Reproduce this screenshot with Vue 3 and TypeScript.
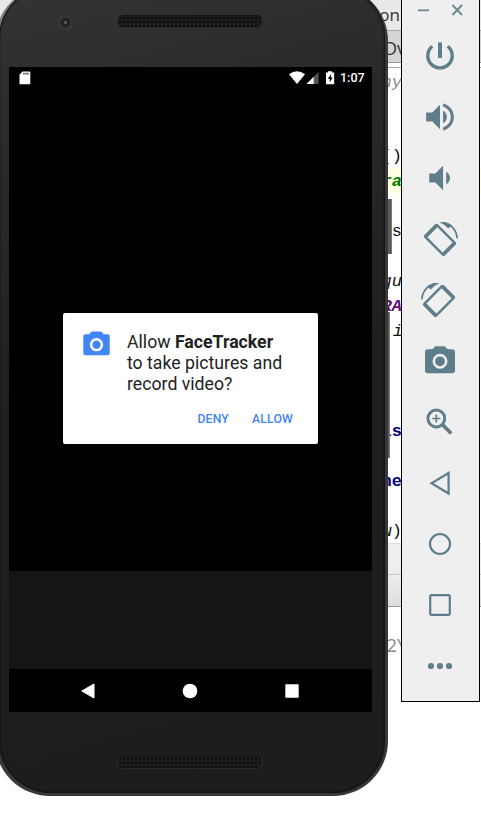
<script setup lang="ts">
interface CodeLine {
  text: string
  tone?: string
}

const codeLines: CodeLine[] = [
  { text: 'ny', tone: 'comment' },
  { text: '' },
  { text: '' },
  { text: '()' },
  { text: 'ra', tone: 'string' },
  { text: '' },
  { text: 's' },
  { text: '' },
  { text: 'qu', tone: 'italic' },
  { text: 'RA', tone: 'constant' },
  { text: 'i', tone: 'italic last' },
  { text: '' },
  { text: '' },
  { text: '' },
  { text: 'is', tone: 'keyword' },
  { text: '' },
  { text: 'ne', tone: 'keyword' },
  { text: '' },
  { text: 'w)' },
]

const tools: string[] = [
  'power', 'volume-up', 'volume-down', 'rotate-left', 'rotate-right',
  'camera', 'zoom', 'back', 'home', 'overview', 'more',
]
</script>

<template>
  <main class="desktop">
    <section class="editor">
      <div class="title-row"><span>on</span></div>
      <div class="tab-row"><span>Dv</span></div>
      <div class="code">
        <div v-for="(line, i) in codeLines" :key="i" class="line" :class="line.tone">
          <span>{{ line.text }}</span>
        </div>
      </div>
      <div class="panel-head"></div>
      <div class="panel-bar"></div>
      <div class="log-row"><span>b2Y</span></div>
    </section>

    <div class="side-key power-key"></div>
    <div class="side-key volume-key"></div>

    <section class="phone">
      <div class="face">
        <div class="top-bezel">
          <i class="lens"></i>
          <i class="speaker"></i>
        </div>
        <div class="screen">
          <header class="status">
            <svg class="sd" width="12" height="14" viewBox="0 0 12 14">
              <path d="M3.500.5H10.500Q11.300.5 11.300 1.300V12.500Q11.300 13.300 10.500 13.300H1.300Q.5 13.300.5 12.500V3.700z" fill="#fff" />
              <path d="M4.900 1.800v1.800M6.900 1.800v1.800M8.900 1.800v1.800" stroke="#222" stroke-width="1.200" />
            </svg>
            <svg class="signals" width="46" height="14" viewBox="0 0 46 14">
              <path d="M0 3.200Q8 -2.600 16 3.200L8 13z" fill="#fff" />
              <path d="M29.500 1V13H17.500z" fill="#555" />
              <path d="M24.700 5.800V13H17.500z" fill="#fff" />
              <path d="M37 1.500h2V.3h4v1.200h2.200V13.300H37z" fill="#fff" />
              <path d="M41.900 3.200l-3.100 4.600h1.900v3.500l3-4.800h-1.800z" fill="#000" />
            </svg>
            <span class="clock">1:07</span>
          </header>
          <div class="app">
            <div class="dialog">
              <div class="message">
                <svg class="dialog-camera" width="27" height="25" viewBox="0 0 27 25">
                  <path d="M8.700.5h9.600l2.400 2.700h4Q26.700 3.200 26.700 5.200V22.200Q26.700 24.200 24.700 24.200H2.300Q.3 24.200.3 22.200V5.200Q.3 3.200 2.300 3.200h4z" fill="#4285f4" />
                  <circle cx="13.500" cy="13.700" r="5.400" fill="none" stroke="#fff" stroke-width="2.500" />
                </svg>
                <p>Allow <b>FaceTracker</b><br>to take pictures and<br>record video?</p>
              </div>
              <div class="actions"><button>DENY</button><button>ALLOW</button></div>
            </div>
          </div>
          <div class="dock"></div>
          <nav class="nav">
            <svg width="14" height="16" viewBox="0 0 14 16"><path d="M13 1V15L.8 8z" fill="#fff" stroke="#fff" stroke-linejoin="round" /></svg>
            <svg width="16" height="16" viewBox="0 0 16 16"><circle cx="8" cy="8" r="7.300" fill="#fff" /></svg>
            <svg width="14" height="14" viewBox="0 0 14 14"><rect x=".3" y=".3" width="13.400" height="13.400" rx=".8" fill="#fff" /></svg>
          </nav>
        </div>
        <div class="bottom-bezel"><i class="speaker"></i></div>
      </div>
    </section>

    <aside class="toolbar">
      <div class="window-controls">
        <svg width="46" height="14" viewBox="0 0 46 14" fill="none" stroke="#6d8793">
          <path d="M0 7.300H11" stroke-width="1.800" />
          <path d="M34.500 2L44 12M44 2L34.500 12" stroke-width="1.900" />
        </svg>
      </div>
      <div v-for="tool in tools" :key="tool" class="tool">
        <svg width="40" height="40" viewBox="-20 -20 40 40" fill="#607d8b">
          <g v-if="tool === 'power'" fill="none" stroke="#607d8b">
            <path d="M0 -13.500V2" stroke-width="4" />
            <path d="M-7.700 -9.800A12.200 12.200 0 1 0 7.700 -9.800" stroke-width="3.400" />
          </g>
          <path v-else-if="tool === 'volume-up'" transform="scale(1.540) translate(-12 -12)" d="M3 9v6h4l5 5V4L7 9H3zm13.500 3c0-1.770-1.020-3.290-2.500-4.030v8.050c1.480-.73 2.500-2.250 2.500-4.020zM14 3.230v2.060c2.890.86 5 3.540 5 6.710s-2.110 5.850-5 6.710v2.060c4.010-.91 7-4.490 7-8.770s-2.990-7.860-7-8.770z" />
          <path v-else-if="tool === 'volume-down'" transform="scale(1.540) translate(-12 -12)" d="M18.500 12c0-1.770-1.020-3.290-2.500-4.030v8.050c1.480-.73 2.500-2.250 2.500-4.020zM5 9v6h4l5 5V4L9 9H5z" />
          <g v-else-if="tool.startsWith('rotate')" :transform="tool === 'rotate-right' ? 'translate(-1 0) scale(-1 1)' : undefined">
            <path transform="translate(0 .9) rotate(45)" fill-rule="evenodd" d="M-12.500 -9.500H12.500Q14.500 -9.500 14.500 -7.500V7.500Q14.500 9.500 12.500 9.500H-12.500Q-14.500 9.500 -14.500 7.500V-7.500Q-14.500 -9.500 -12.500 -9.500zM-10.700 -7.100V7.100H10.700V-7.100z" />
            <path d="M2 -16.200C10 -16.500 16.500 -9.500 17.200 -.6" fill="none" stroke="#607d8b" stroke-width="1.700" />
            <path d="M-1 -16.500Q6 -18.500 12 -13.500L8.200 -10.500L5.700 -13.100Q3 -15.500 -1 -16.500z" />
          </g>
          <g v-else-if="tool === 'camera'">
            <path d="M-4.600 -14.700h9.200l3.100 3h4.500Q15 -11.700 15 -8.900V9.500Q15 12.300 12.200 12.300H-12.200Q-15 12.300 -15 9.500V-8.900Q-15 -11.700 -12.200 -11.700h4.500z" />
            <circle cy=".3" r="6.200" fill="none" stroke="#eee" stroke-width="2.600" />
          </g>
          <g v-else-if="tool === 'zoom'" fill="none" stroke="#607d8b">
            <circle cx="-3.700" cy="-3.500" r="8.400" stroke-width="3" />
            <path d="M2.800 3L11.300 11.500" stroke-width="3.800" />
            <path d="M-3.700 -7.500V.5M-7.700 -3.500H.3" stroke-width="1.700" />
          </g>
          <path v-else-if="tool === 'back'" d="M8.600 -10V10.500L-8.500 .2z" fill="none" stroke="#607d8b" stroke-width="2.200" />
          <circle v-else-if="tool === 'home'" r="10" fill="none" stroke="#607d8b" stroke-width="2.200" />
          <rect v-else-if="tool === 'overview'" x="-9.800" y="-9.800" width="19.600" height="19.600" rx="1" fill="none" stroke="#607d8b" stroke-width="2.200" />
          <g v-else>
            <circle cx="-9" r="3.100" /><circle r="3.100" /><circle cx="9" r="3.100" />
          </g>
        </svg>
      </div>
    </aside>
  </main>
</template>

<style>
body { margin: 0; overflow: hidden; background: #fff; }
</style>

<style scoped>
* { box-sizing: border-box; }
svg { display: block; flex: none; }
.desktop { position: relative; width: 481px; height: 813px; overflow: hidden; background: #fff; }
.editor { width: 481px; font-family: "Open Sans", sans-serif; color: #333; }
.editor span { display: block; width: 402px; text-align: right; white-space: pre; overflow: hidden; }
.title-row { height: 31px; background: #e8e8e8; border-bottom: 1px solid #aaa; font-size: 17px; line-height: 29px; }
.title-row span { width: 400px; }
.tab-row { height: 36px; background: #d4d4d4; border-bottom: 4px solid #fff; box-shadow: inset 0 -1px #999; font-size: 18px; line-height: 34px; }
.tab-row span { width: 406px; }
.code { border-top: 1px solid #aaa; font: 17px/25px "Liberation Mono", monospace; color: #111; }
.line { height: 25px; padding-top: 1px; }
.comment { padding-top: 2px; color: #888; font-style: italic; }
.string { color: #008000; background: #ffffe4; font-weight: bold; font-style: italic; }
.constant { color: #660e7a; font-weight: bold; font-style: italic; }
.keyword { color: #000080; font-weight: bold; }
.italic { font-style: italic; }
.last span { width: 403px; }
.panel-head { height: 32px; background: #eee; border-top: 1px solid #ddd; border-bottom: 1px solid #c8c8c8; }
.panel-bar { height: 32px; background: linear-gradient(#eee, #dcdcdc); border-bottom: 1px solid #999; }
.log-row { padding-top: 25px; font-size: 18px; line-height: 26px; color: #888; }
.log-row span { width: 407px; }

.side-key { position: absolute; left: 386px; background: #5c5a5c; border-right: 1px solid #777; }
.power-key { top: 199px; width: 6px; height: 55px; }
.volume-key { top: 312px; width: 4px; height: 146px; }

.phone { position: absolute; left: -5px; top: -14px; width: 393px; height: 810px; padding: 0 3px 3px 4px; border-radius: 55px; background: linear-gradient(115deg, #939694 0, #777 4%, #3b3a3a 8%, #383737 100%); }
.face { display: flex; flex-direction: column; height: 100%; padding: 0 13px 0 10px; border-radius: 52px; background: linear-gradient(165deg, #343434, #292929 22%, #1f1f1f 50%, #1d1d1e); box-shadow: inset 0 0 2px 1px #111; }
.top-bezel { display: flex; height: 81px; padding: 29px 0 0 48px; }
.lens { width: 17px; height: 17px; margin-top: -1px; border-radius: 50%; background: radial-gradient(circle, #62515e 0 1px, #252128 2px 4px, #393539 6px 7px, #303030 8px); }
.speaker { display: block; width: 146px; height: 13px; border: 1px solid #2a2a2a; border-top-color: #151515; border-radius: 7px; background: radial-gradient(circle, #0b0b0b 0 .9px, #1d1d1d 1.500px) 0 0 / 4px 4px; }
.top-bezel .speaker { margin-left: 43px; }
.screen { display: flex; flex-direction: column; flex: none; width: 363px; height: 645px; background: #000; }
.status { display: flex; align-items: center; height: 21px; padding: 0 7px 0 10px; color: #fff; font: 500 12.500px/21px Roboto, sans-serif; }
.signals { margin-left: auto; }
.clock { width: 25px; margin-left: 5px; white-space: nowrap; }
.app { flex: 1; padding: 225px 54px 0 54px; }
.dialog { height: 131px; padding: 18px 17px 0 20px; border-radius: 2px; background: #fff; font-family: Roboto, sans-serif; }
.message { display: flex; gap: 17px; }
.message p { margin: 0; padding-top: 1px; color: #222; font-size: 17.700px; line-height: 21px; white-space: nowrap; }
.actions { display: flex; justify-content: flex-end; gap: 7px; margin-top: 11px; }
button { padding: 0 8px; border: 0; background: none; color: #4285f4; font: 500 12.200px/26px Roboto, sans-serif; letter-spacing: .2px; }
.dock { height: 98px; background: #151515; }
.nav { display: flex; align-items: center; justify-content: space-between; height: 43px; padding: 0 73px 0 72px; }
.bottom-bezel { padding: 44px 0 0 108px; }

.toolbar { position: absolute; left: 401px; top: -1px; width: 79px; height: 703px; border: 1px solid #000; background: #efefef; }
.window-controls { height: 25px; padding: 3px 0 0 16px; }
.tool { display: flex; align-items: center; justify-content: center; height: 61px; padding-right: 2px; }
</style>
